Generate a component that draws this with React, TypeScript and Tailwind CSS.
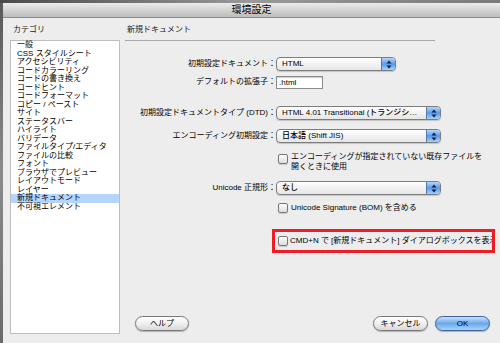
import React from "react";

const categories = [
  "一般",
  "CSS スタイルシート",
  "アクセシビリティ",
  "コードカラーリング",
  "コードの書き換え",
  "コードヒント",
  "コードフォーマット",
  "コピー / ペースト",
  "サイト",
  "ステータスバー",
  "ハイライト",
  "バリデータ",
  "ファイルタイプ/エディタ",
  "ファイルの比較",
  "フォント",
  "ブラウザでプレビュー",
  "レイアウトモード",
  "レイヤー",
  "新規ドキュメント",
  "不可視エレメント",
];

function Arrows() {
  return (
    <svg width="6" height="9" viewBox="0 0 6 9">
      <path d="M3 0.5 L5.5 3.5 L0.5 3.5 Z" fill="#0b1f4a" />
      <path d="M3 8.5 L5.5 5.5 L0.5 5.5 Z" fill="#0b1f4a" />
    </svg>
  );
}

function Popup({ text, wide }: { text: string; wide?: boolean }) {
  return (
    <div
      className={
        "flex h-[14px] items-stretch overflow-hidden rounded-[4px] border border-[#7d7d7d] bg-gradient-to-b from-white to-[#e6e6e6] shadow-[0_1px_1px_rgba(0,0,0,0.18)] " +
        (wide ? "w-[165px]" : "w-[120px]")
      }
    >
      <div className="flex-1 truncate pl-[5px] text-[8px] leading-[12px] font-medium text-black">{text}</div>
      <div className="flex w-[14px] items-center justify-center border-l border-[#5577aa] bg-gradient-to-b from-[#b7d7fa] via-[#5a99e8] to-[#a6d0fa]">
        <Arrows />
      </div>
    </div>
  );
}

function Check() {
  return (
    <div className="h-[10px] w-[10px] shrink-0 rounded-[2px] border border-[#777] bg-gradient-to-b from-white to-[#dcdcdc] shadow-[0_1px_1px_rgba(0,0,0,0.15)]" />
  );
}

function Btn({ label, primary, w }: { label: string; primary?: boolean; w: string }) {
  return (
    <div
      className={
        "flex h-[15px] items-center justify-center rounded-full border text-[8px] leading-none shadow-[0_1px_1px_rgba(0,0,0,0.25)] " +
        w +
        (primary
          ? " border-[#3f5f99] bg-gradient-to-b from-[#c9e2fb] via-[#6aa8ec] to-[#a9d3fb] text-black"
          : " border-[#7a7a7a] bg-gradient-to-b from-white via-[#f0f0f0] to-[#d8d8d8] text-black")
      }
    >
      {label}
    </div>
  );
}

function Label({ text }: { text: string }) {
  return <div className="w-[151px] shrink-0 text-right text-[8px] leading-[14px] text-black">{text}</div>;
}

export default function App() {
  return (
    <div className="relative flex h-[343px] w-[500px] flex-col overflow-hidden bg-[#6e6e6e] font-['Liberation_Sans','Noto_Sans_CJK_JP',sans-serif]">
      <div className="h-[3px] shrink-0 bg-gradient-to-r from-[#4a4a4a] via-[#9a9a9a] to-[#7a7a7a]" />
      <div className="flex min-h-0 flex-1">
        <div className="w-[3px] shrink-0 bg-gradient-to-b from-[#5a5a5a] via-[#8b8b8b] to-[#6a6a6a]" />
        <div className="flex min-w-0 flex-1 flex-col bg-[#ededed]">
          {/* title bar */}
          <div className="flex h-[15px] shrink-0 items-center justify-center rounded-t-[4px] border-b border-[#8c8c8c] bg-gradient-to-b from-[#ececec] to-[#bcbcbc] text-[10px] leading-none text-black">
            環境設定
          </div>
          <div className="flex min-h-0 flex-1">
            {/* category list */}
            <div className="flex w-[122px] shrink-0 flex-col pl-[7px] pt-[7px]">
              <div className="pl-[3px] text-[8px] leading-[10px] text-[#222]">カテゴリ</div>
              <div className="mt-[5px] h-[294px] w-[110px] border border-[#bdbdbd] bg-white">
                {categories.map((c) => (
                  <div
                    key={c}
                    className={
                      "whitespace-nowrap pl-[6px] text-[8px] leading-[8.5px] text-black " +
                      (c === "新規ドキュメント" ? "bg-[#b5d5ff]" : "")
                    }
                  >
                    {c}
                  </div>
                ))}
              </div>
            </div>
            {/* settings panel */}
            <div className="flex min-w-0 flex-1 flex-col pt-[7px]">
              <div className="pl-[2px] text-[8px] leading-[10px] text-[#222]">新規ドキュメント</div>
              <div className="mt-[5px] h-px w-[310px] bg-[#a9a9a9]" />

              <div className="mt-[16px] flex items-center">
                <Label text="初期設定ドキュメント：" />
                <Popup text="HTML" />
              </div>
              <div className="mt-[4px] flex items-center">
                <Label text="デフォルトの拡張子：" />
                <div className="h-[13px] w-[47px] border border-[#8a8a8a] bg-white pl-[2px] text-[8px] leading-[11px] text-black shadow-[inset_0_1px_1px_rgba(0,0,0,0.2)]">
                  .html
                </div>
              </div>
              <div className="mt-[17px] flex items-center">
                <Label text="初期設定ドキュメントタイプ (DTD)：" />
                <Popup wide text="HTML 4.01 Transitional (トランジシ…" />
              </div>
              <div className="mt-[9px] flex items-center">
                <Label text="エンコーディング初期設定：" />
                <Popup wide text="日本語 (Shift JIS)" />
              </div>
              <div className="ml-[153px] mt-[9px] flex items-start gap-[3px]">
                <div className="pt-[2px]">
                  <Check />
                </div>
                <div className="text-[8px] leading-[10px] text-black">
                  エンコーディングが指定されていない既存ファイルを
                  <br />
                  開くときに使用
                </div>
              </div>
              <div className="mt-[9px] flex items-center">
                <Label text="Unicode 正規形：" />
                <Popup wide text="なし" />
              </div>
              <div className="ml-[153px] mt-[7px] flex items-center gap-[3px]">
                <Check />
                <div className="text-[8px] leading-[12px] text-black">Unicode Signature (BOM) を含める</div>
              </div>
              <div className="ml-[147px] mt-[15px] flex h-[24px] w-[223px] items-center gap-[2px] overflow-hidden border-[3px] border-[#ee1c25] pl-[3px]">
                <Check />
                <div className="whitespace-nowrap text-[8px] leading-[12px] text-black">
                  CMD+N で [新規ドキュメント] ダイアログボックスを表示
                </div>
              </div>

              <div className="mt-auto flex items-center pb-[12px] pl-[10px] pr-[10px]">
                <Btn label="ヘルプ" w="w-[54px]" />
                <div className="flex-1" />
                <Btn label="キャンセル" w="w-[55px]" />
                <div className="w-[7px]" />
                <Btn label="OK" primary w="w-[55px]" />
              </div>
            </div>
          </div>
        </div>
      </div>
    </div>
  );
}
